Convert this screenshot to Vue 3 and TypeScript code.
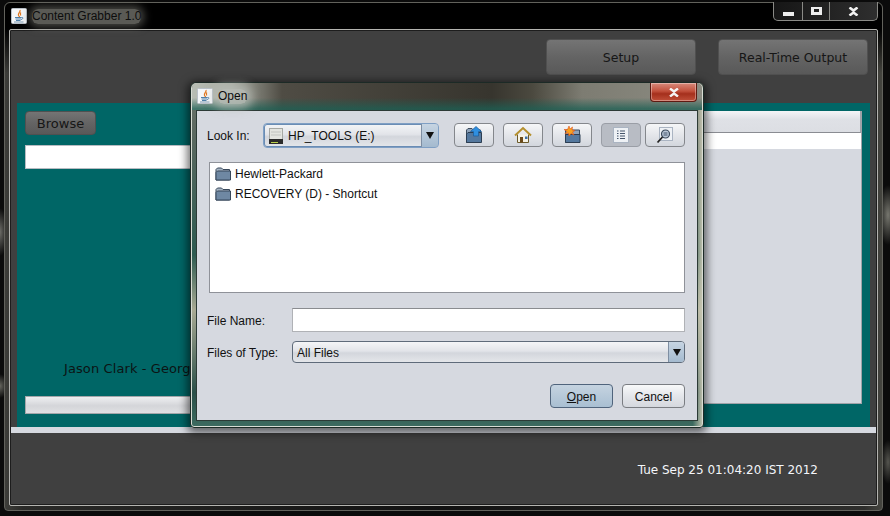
<script setup lang="ts">
const files: string[] = ['Hewlett-Packard', 'RECOVERY (D) - Shortcut']
</script>

<template>
  <div class="desktop">
    <svg class="defs" width="0" height="0">
      <symbol id="java" viewBox="0 0 16 16">
        <rect x="0.5" y="0.5" width="15" height="15" rx="1" fill="#f4f6f8" stroke="#b9c0c8" />
        <path d="M9 2C10 4 6.500 5 7.500 7.500 8 8.500 8.500 8 8.500 9 M10 4.500C8.500 5.500 9.500 6.500 9.800 7.500" fill="none" stroke="#e2761b" stroke-width="1.200" />
        <path d="M4 9.500H10.500M4.500 11H10M5 12.500H9.500M10.500 9.500C12.500 9 12.500 11 10 11.500" fill="none" stroke="#4f7fa8" stroke-width="1" />
        <path d="M3 14H12.500" stroke="#7d98b0" stroke-width="1" />
      </symbol>
      <symbol id="folder" viewBox="0 0 16 16">
        <path d="M1 14V3.500L2.500 2H6.500L8 3.500H14.500V14Z" fill="#a9b6c4" stroke="#37475a" />
        <path d="M1 14V6.500L2.500 5H15.500V14Z" fill="#6f88a3" stroke="#37475a" />
      </symbol>
    </svg>

    <div class="window">
      <header class="titlebar">
        <svg class="java-icon" width="16" height="16"><use href="#java" /></svg>
        <span class="title">Content Grabber 1.0</span>
        <div class="controls">
          <div class="ctl ctl-min"><i class="min-glyph"></i></div>
          <div class="ctl ctl-max"><i class="max-glyph"></i></div>
          <div class="ctl ctl-close">
            <svg width="11" height="9" viewBox="0 0 11 9"><path d="M1.500 .5 5.500 3.500 9.500 .5M1.500 8.500 5.500 5.500 9.500 8.500" fill="none" stroke="#f2f2f2" stroke-width="2.600" /></svg>
          </div>
        </div>
      </header>

      <div class="pane">
        <div class="top-row">
          <button class="dark-btn big">Setup</button>
          <button class="dark-btn big">Real-Time Output</button>
        </div>

        <div class="teal-panel">
          <div class="left-col">
            <button class="dark-btn browse">Browse</button>
            <div class="path-field"></div>
            <div class="track-label">Jason Clark - George Strait</div>
            <div class="progress"></div>
          </div>
          <div class="right-col">
            <div class="tbl-head"></div>
            <div class="tbl-row"></div>
          </div>
        </div>

        <div class="strip"></div>
        <div class="status">Tue Sep 25 01:04:20 IST 2012</div>
      </div>
    </div>

    <div class="dialog">
      <div class="dlg-title">
        <svg class="java-icon" width="16" height="16"><use href="#java" /></svg>
        <span class="title dlg-name">Open</span>
        <div class="dlg-close">
          <svg width="12" height="9" viewBox="0 0 12 9"><path d="M2 .5 6 3.500 10 .5M2 8.500 6 5.500 10 8.500" fill="none" stroke="#f4f4f4" stroke-width="2.400" /></svg>
        </div>
      </div>

      <div class="dlg-pane">
        <div class="look-row">
          <span class="look-label">Look In:</span>
          <div class="combo look-combo">
            <svg width="14" height="16" viewBox="0 0 14 16" class="drive">
              <rect x="0.5" y="0.5" width="13" height="11" fill="#e3e4e0" stroke="#a6a8a4" />
              <path d="M2 4H12M2 7H12" stroke="#c2c4c0" />
              <rect x="0" y="11" width="14" height="5" fill="#2b2b2b" />
              <path d="M2 14.500H9" stroke="#b8d04a" />
            </svg>
            <span class="combo-text">HP_TOOLS (E:)</span>
            <span class="arrow"><i></i></span>
          </div>
          <div class="tools">
            <button class="tool">
              <svg width="18" height="18" viewBox="0 0 18 18">
                <path d="M1.500 16.500V4L3 2.500H7L8.500 4H15.500V16.500Z" fill="#8ea3ba" stroke="#3a4a5c" />
                <path d="M1.500 16.500V8L3 6.500H16.500V16.500Z" fill="#54789e" stroke="#2c3e52" />
                <path d="M11 .5 16.500 5.500H13.500V10H8.500V5.500H5.500Z" fill="#2f8fe0" stroke="#1a5a9a" stroke-width=".7" />
              </svg>
            </button>
            <button class="tool">
              <svg width="18" height="18" viewBox="0 0 18 18">
                <path d="M3.500 8.500V16.500H14.500V8.500" fill="#f6f3e6" stroke="#6b5a2a" />
                <path d="M1 9.500 9 2 17 9.500" fill="none" stroke="#b5902e" stroke-width="2" />
                <rect x="6" y="11" width="3" height="5.500" fill="#6b4a1a" />
                <rect x="11" y="10.500" width="2.500" height="2.500" fill="#3d6fa8" />
              </svg>
            </button>
            <button class="tool">
              <svg width="18" height="18" viewBox="0 0 18 18">
                <path d="M2.500 16.500V4H16.500V16.500Z" fill="#8ea3ba" stroke="#3a4a5c" />
                <path d="M2.500 16.500V8.500H17V16.500Z" fill="#54789e" stroke="#2c3e52" />
                <path d="M6 0 7 3 9.500 1 9 4 12 4.500 9.500 6 11 9 8 7.500 6 10 5.500 7 2 7.500 4 5.500 1 3.500 4.500 3.500Z" fill="#f7a11e" stroke="#e2531b" stroke-width=".6" />
              </svg>
            </button>
            <button class="tool active">
              <svg width="16" height="16" viewBox="0 0 16 16">
                <rect x="0.5" y="0.5" width="15" height="15" fill="#eef1f5" stroke="#aab4c2" />
                <path d="M4 4H5.500M7 4H12M4 6.500H5.500M7 6.500H12M4 9H5.500M7 9H12M4 11.500H5.500M7 11.500H12" stroke="#44546a" />
              </svg>
            </button>
            <button class="tool">
              <svg width="18" height="18" viewBox="0 0 18 18">
                <rect x="3.500" y="1.500" width="13" height="13" fill="#eef1f5" stroke="#aab4c2" />
                <circle cx="9.500" cy="8" r="4" fill="#b9c6d6" stroke="#3c4a5c" stroke-width="1.200" />
                <path d="M7.500 7H11.500M7.500 9H11.500" stroke="#44546a" />
                <path d="M6.500 11 1.500 16.500" stroke="#222" stroke-width="1.800" />
              </svg>
            </button>
          </div>
        </div>

        <ul class="file-list">
          <li v-for="f in files" :key="f" class="file-item">
            <svg width="16" height="16"><use href="#folder" /></svg>
            <span>{{ f }}</span>
          </li>
        </ul>

        <div class="form-row name-row">
          <span class="form-label">File Name:</span>
          <div class="name-input"></div>
        </div>
        <div class="form-row type-row">
          <span class="form-label">Files of Type:</span>
          <div class="combo type-combo">
            <span class="combo-text">All Files</span>
            <span class="arrow"><i></i></span>
          </div>
        </div>

        <div class="actions">
          <button class="act primary"><u>O</u>pen</button>
          <button class="act">Cancel</button>
        </div>
      </div>
    </div>
  </div>
</template>

<style>
html,
body {
  margin: 0;
  background: #0a0a0a;
  overflow: hidden;
}
</style>

<style scoped>
.desktop {
  position: relative;
  width: 890px;
  height: 516px;
  overflow: hidden;
  padding: 2px 0 0 4px;
  box-sizing: border-box;
  background:
    radial-gradient(ellipse 10px 30px at 888px 215px, #77776f, transparent),
    radial-gradient(ellipse 7px 22px at 888px 462px, #55554f, transparent),
    radial-gradient(ellipse 8px 24px at 0 232px, #6d6d68, transparent),
    radial-gradient(ellipse 8px 12px at 0 386px, #66665f, transparent),
    #0b0b0b;
  font-family: "Liberation Sans", Arial, sans-serif;
}

.defs {
  position: absolute;
}

.window {
  width: 879px;
  height: 509px;
  box-sizing: border-box;
  border: 1px solid #62625c;
  border-radius: 6px 6px 4px 4px;
  background:
    linear-gradient(#000 0, #000 26px, transparent 70px),
    linear-gradient(90deg, #3e3e3a, #2a2a28 2%, #111 50%, #2e2e2c 98%, #45453f);
  padding: 0 4px;
  display: flex;
  flex-direction: column;
}

.titlebar {
  height: 26px;
  display: flex;
  align-items: flex-start;
  padding-left: 2px;
  position: relative;
  flex: none;
}

.java-icon {
  flex: none;
  margin-top: 5px;
}

.title {
  margin: 6px 0 0 5px;
  height: 15px;
  font-size: 12px;
  line-height: 15px;
  color: #0d0d0d;
  border-radius: 6px;
  background: rgba(112, 112, 106, .8);
  box-shadow: 0 0 8px 3px rgba(112, 112, 106, .65);
}

.dlg-name {
  background: rgba(186, 190, 184, .8);
  box-shadow: 0 0 9px 5px rgba(186, 190, 184, .65);
}

.controls {
  margin-left: auto;
  display: flex;
  height: 19px;
  margin-top: -1px;
  border: 1px solid #8a8a86;
  border-top: none;
  border-radius: 0 0 5px 5px;
  box-sizing: border-box;
  background: linear-gradient(90deg, #161616, #2e2e2e);
}

.ctl {
  display: flex;
  align-items: center;
  justify-content: center;
  box-sizing: border-box;
  border-right: 1px solid #8a8a86;
}

.ctl-min {
  width: 29px;
}

.ctl-max {
  width: 27px;
}

.ctl-close {
  width: 47px;
  border-right: none;
}

.min-glyph {
  display: block;
  width: 11px;
  height: 4px;
  margin-top: 6px;
  background: #ececec;
}

.max-glyph {
  display: block;
  width: 5px;
  height: 3px;
  border: 3px solid #ececec;
  border-top-width: 2px;
}

.pane {
  flex: 1;
  margin-bottom: 4px;
  box-sizing: border-box;
  border: 1px solid #b4b4b0;
  box-shadow: inset 0 0 0 1px #1d1d1d;
  border-radius: 2px;
  padding: 1px;
  background: #404040;
  display: flex;
  flex-direction: column;
}

.top-row {
  height: 72px;
  flex: none;
  box-sizing: border-box;
  padding: 8px 8px 0 0;
  display: flex;
  justify-content: flex-end;
  gap: 22px;
}

.dark-btn {
  display: block;
  padding: 0;
  border: 1px solid #505050;
  background: linear-gradient(#747474, #646464 50%, #595959);
  color: #161616;
  font-family: "DejaVu Sans", sans-serif;
  font-size: 13px;
}

.big {
  width: 150px;
  height: 36px;
  border-radius: 4px;
  font-size: 12.5px;
}

.teal-panel {
  margin: 0 6px;
  height: 324px;
  flex: none;
  box-sizing: border-box;
  background: #006666;
  padding: 8px;
  display: flex;
  gap: 10px;
}

.left-col {
  width: 410px;
  display: flex;
  flex-direction: column;
}

.browse {
  width: 71px;
  height: 24px;
  border-radius: 4px;
}

.path-field {
  height: 24px;
  margin-top: 10px;
  box-sizing: border-box;
  border: 1px solid #b8bcc2;
  background: #fff;
}

.track-label {
  margin: 192px 0 0 39px;
  height: 16px;
  line-height: 16px;
  font-family: "DejaVu Sans", sans-serif;
  font-size: 13px;
  letter-spacing: .1px;
  color: #0c1414;
  white-space: nowrap;
}

.progress {
  height: 18px;
  margin-top: 19px;
  box-sizing: border-box;
  border: 1px solid #a4a6aa;
  background: linear-gradient(#eeeff1, #d4d5d9 55%, #dfe0e3);
}

.right-col {
  flex: 1;
  height: 293px;
  box-sizing: border-box;
  border: 1px solid #a0a2a8;
  border-top: none;
  background: #d6d9e0;
}

.tbl-head {
  height: 22px;
  box-sizing: border-box;
  border-bottom: 1px solid #8a8c92;
  border-right: 1px solid #a0a2a8;
  background: linear-gradient(#f4f5f7, #dfe1e6 40%, #dcdee3);
}

.tbl-row {
  height: 16px;
  background: #fff;
}

.strip {
  height: 6px;
  flex: none;
  background: #d6d9e0;
}

.status {
  padding: 29px 58px 0 0;
  text-align: right;
  font-family: "DejaVu Sans", sans-serif;
  font-size: 12px;
  line-height: 16px;
  color: #f4f6fa;
}

.dialog {
  position: absolute;
  left: 190px;
  top: 82px;
  width: 514px;
  height: 346px;
  box-sizing: border-box;
  border: 1px solid #1c2a26;
  border-radius: 6px 6px 4px 4px;
  padding: 0 5px 6px 5px;
  display: flex;
  flex-direction: column;
  box-shadow: inset 0 0 0 1px #d8dcd4, 0 2px 8px 3px rgba(0, 0, 0, .55);
  background:
    linear-gradient(90deg, transparent 98%, #c9c8b4),
    linear-gradient(#6d746c 0, #5f6a62 12%, #2d5a50 50%, #a9aa94 66%, #2a4f48 90%, #3d6b60);
}

.dlg-title {
  height: 27px;
  flex: none;
  display: flex;
  align-items: flex-start;
  margin: 0 -4px;
  padding-left: 5px;
  background:
    linear-gradient(transparent 55%, rgba(28, 96, 84, .75) 95%),
    linear-gradient(90deg, #b8bdb4 0, #a8aca2 40px, #4f4c44 90px, #37352e 300px, #4b493f 340px, #7d7c72 390px, #8c8c82);
  position: relative;
  border-radius: 5px 5px 0 0;
}

.dlg-close {
  margin-left: auto;
  margin-right: 5px;
  width: 47px;
  height: 19px;
  box-sizing: border-box;
  border: 1px solid #5e1a12;
  border-top: none;
  border-radius: 0 0 4px 4px;
  box-shadow: inset 0 0 0 1px rgba(255, 255, 255, .35);
  background: linear-gradient(#d98a7c, #c2503c 45%, #a52f1c 60%, #c0503a);
  display: flex;
  align-items: center;
  justify-content: center;
}

.dlg-pane {
  flex: 1;
  box-sizing: border-box;
  border: 1px solid #2c3a36;
  background: #d6d9e0;
  padding: 12px 12px 0 10px;
  display: flex;
  flex-direction: column;
  color: #111;
  font-size: 12px;
}

.look-row {
  display: flex;
  height: 25px;
  align-items: flex-start;
}

.look-label {
  width: 56px;
  line-height: 26px;
  flex: none;
}

.combo {
  display: flex;
  align-items: center;
  box-sizing: border-box;
  border: 1px solid #5f6b7a;
  border-radius: 4px;
  background: linear-gradient(#f4f5f7, #e2e4e9 45%, #d3d6dc 55%, #e4e6ea);
}

.look-combo {
  width: 176px;
  height: 25px;
  flex: none;
  border-color: #7f9fc4;
  box-shadow: inset 0 0 0 1px #6a8cb4;
  padding-left: 5px;
}

.drive {
  flex: none;
  margin-right: 5px;
}

.combo-text {
  flex: 1;
  line-height: 16px;
}

.arrow {
  width: 16px;
  align-self: stretch;
  flex: none;
  display: flex;
  align-items: center;
  justify-content: center;
  border-left: 1px solid #7e8ea2;
  border-radius: 0 3px 3px 0;
  background: linear-gradient(#c6d4e2, #a4bacf);
}

.arrow i {
  display: block;
  width: 0;
  height: 0;
  border-left: 4px solid transparent;
  border-right: 4px solid transparent;
  border-top: 7px solid #111;
}

.tools {
  margin-left: 15px;
  display: flex;
}

.tool {
  width: 40px;
  height: 24px;
  padding: 0;
  margin-right: 9px;
  display: flex;
  align-items: center;
  justify-content: center;
  border: 1px solid #84878c;
  border-radius: 4px;
  background: linear-gradient(#f5f6f8, #e4e6ea 50%, #d2d6dd);
}

.tool:nth-child(4) {
  margin-right: 4px;
}

.tool.active {
  background: #b8bcc4;
  border-color: #9a9ea6;
}

.file-list {
  list-style: none;
  margin: 14px 0 0 2px;
  padding: 1px 0 0 5px;
  height: 131px;
  box-sizing: border-box;
  border: 1px solid #8f9299;
  background: #fff;
}

.file-item {
  height: 20px;
  display: flex;
  align-items: center;
  gap: 4px;
  color: #111;
}

.form-row {
  display: flex;
  align-items: center;
}

.form-label {
  width: 85px;
  flex: none;
  padding-top: 2px;
}

.name-row {
  margin-top: 15px;
}

.name-input {
  flex: 1;
  height: 24px;
  box-sizing: border-box;
  border: 1px solid #b0b2b6;
  border-top-color: #8a8c90;
  background: #fff;
}

.type-row {
  margin-top: 9px;
}

.type-combo {
  flex: 1;
  height: 22px;
  padding-left: 4px;
}

.type-combo .combo-text {
  padding-top: 2px;
}

.type-combo .arrow {
  width: 15px;
}

.actions {
  margin-top: 21px;
  display: flex;
  justify-content: flex-end;
  gap: 9px;
}

.act {
  width: 63px;
  height: 24px;
  padding: 2px 0 0;
  border: 1px solid #7a7d82;
  border-radius: 4px;
  background: linear-gradient(#f8f9fa, #e4e6ea 50%, #d5d8de);
  font-family: "Liberation Sans", Arial, sans-serif;
  font-size: 12px;
  color: #111;
}

.act.primary {
  border-color: #50647c;
  background: linear-gradient(#c5d3e0, #a9bfd2);
}
</style>
